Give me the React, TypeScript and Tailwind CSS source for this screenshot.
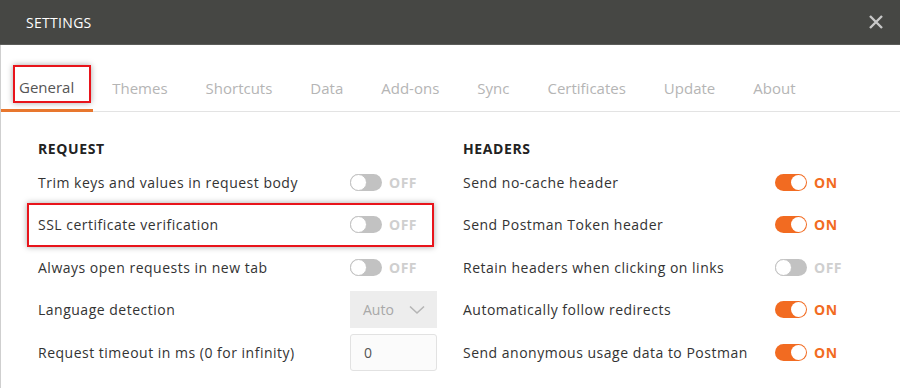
import React from "react";

const font = { fontFamily: '"Open Sans", "Noto Sans", sans-serif' };

function Toggle({ on }: { on: boolean }) {
  return (
    <div className="flex items-center gap-[7px]">
      <div
        className={
          on
            ? "relative w-[32px] h-[17px] rounded-full bg-[#f26b21]"
            : "relative w-[32px] h-[17px] rounded-full bg-[#c2c2c2]"
        }
      >
        <div
          className={
            on
              ? "absolute top-[1px] right-[1px] w-[15px] h-[15px] rounded-full bg-white"
              : "absolute top-0 left-0 w-[17px] h-[17px] rounded-full bg-white border border-[#c2c2c2]"
          }
        />
      </div>
      <span
        className={
          on
            ? "text-[14px] font-bold text-[#f26b21] tracking-[0.5px]"
            : "text-[14px] font-bold text-[#cfcfcf] tracking-[0.5px]"
        }
      >
        {on ? "ON" : "OFF"}
      </span>
    </div>
  );
}

function Row({
  label,
  children,
  highlight,
}: {
  label: string;
  children: React.ReactNode;
  highlight?: boolean;
}) {
  return (
    <div className="relative flex items-center h-[42.5px]">
      {highlight && (
        <div className="absolute left-[-11px] w-[407px] top-[-1px] bottom-[-1px] border-2 border-[#e8141b] shadow-[0_0_6px_rgba(0,0,0,0.35)]" />
      )}
      <div className="w-[312px] text-[14px] text-[#333] tracking-[0.5px]">{label}</div>
      {children}
    </div>
  );
}

export default function App() {
  const tabs = [
    "General",
    "Themes",
    "Shortcuts",
    "Data",
    "Add-ons",
    "Sync",
    "Certificates",
    "Update",
    "About",
  ];
  return (
    <div className="w-[900px] h-[388px] bg-white overflow-hidden" style={font}>
      <div className="h-[45px] bg-[#464744] border-b border-[#5c5d5a] flex items-center justify-between pl-[26px] pr-[16px]">
        <span className="text-[14px] text-white tracking-[0.3px]">SETTINGS</span>
        <svg width="16" height="16" viewBox="0 0 16 16">
          <path d="M2 2 L14 14 M14 2 L2 14" stroke="#c8c8c8" strokeWidth="2.4" />
        </svg>
      </div>
      <div className="border-l border-[#cfcfcf] h-[343px]">
        <div className="h-[67px] border-b border-[#e3e3e3] flex items-end">
          {tabs.map((t, i) => (
            <div
              key={t}
              className={
                i === 0
                  ? "relative h-[47px] pl-[18px] pr-[19px] flex items-center border-b-[3px] border-[#e8772e] mb-[-1px] text-[15px] text-[#555]"
                  : "h-[47px] px-[19px] flex items-center mb-[-1px] text-[15px] text-[#b5b5b5]"
              }
            >
              {i === 0 && (
                <div className="absolute left-[12px] top-[0px] w-[78px] h-[38px] border-2 border-[#e8141b] shadow-[0_0_6px_rgba(0,0,0,0.35)]" />
              )}
              <span className="relative">{t}</span>
            </div>
          ))}
        </div>
        <div className="grid grid-cols-[425px_400px] pl-[37px] pt-[25px]">
          <div>
            <div className="text-[14px] font-bold text-[#222] h-[24px] leading-[24px] tracking-[0.6px]">REQUEST</div>
            <Row label="Trim keys and values in request body">
              <Toggle on={false} />
            </Row>
            <Row label="SSL certificate verification" highlight>
              <Toggle on={false} />
            </Row>
            <Row label="Always open requests in new tab">
              <Toggle on={false} />
            </Row>
            <Row label="Language detection">
              <div className="w-[87px] h-[37px] bg-[#ededed] flex items-center justify-between pl-[13px] pr-[12px] text-[14px] text-[#a8a8a8]">
                <span>Auto</span>
                <svg width="16" height="10" viewBox="0 0 16 10">
                  <path d="M1 1.5 L8 8 L15 1.5" stroke="#b5b5b5" strokeWidth="1.6" fill="none" />
                </svg>
              </div>
            </Row>
            <Row label="Request timeout in ms (0 for infinity)">
              <div className="w-[87px] h-[37px] border border-[#e2e2e2] rounded-[3px] bg-[#fbfbfb] flex items-center pl-[13px] text-[14px] text-[#555]">
                0
              </div>
            </Row>
          </div>
          <div>
            <div className="text-[14px] font-bold text-[#222] h-[24px] leading-[24px] tracking-[0.6px]">HEADERS</div>
            <Row label="Send no-cache header">
              <Toggle on />
            </Row>
            <Row label="Send Postman Token header">
              <Toggle on />
            </Row>
            <Row label="Retain headers when clicking on links">
              <Toggle on={false} />
            </Row>
            <Row label="Automatically follow redirects">
              <Toggle on />
            </Row>
            <Row label="Send anonymous usage data to Postman">
              <Toggle on />
            </Row>
          </div>
        </div>
      </div>
    </div>
  );
}
